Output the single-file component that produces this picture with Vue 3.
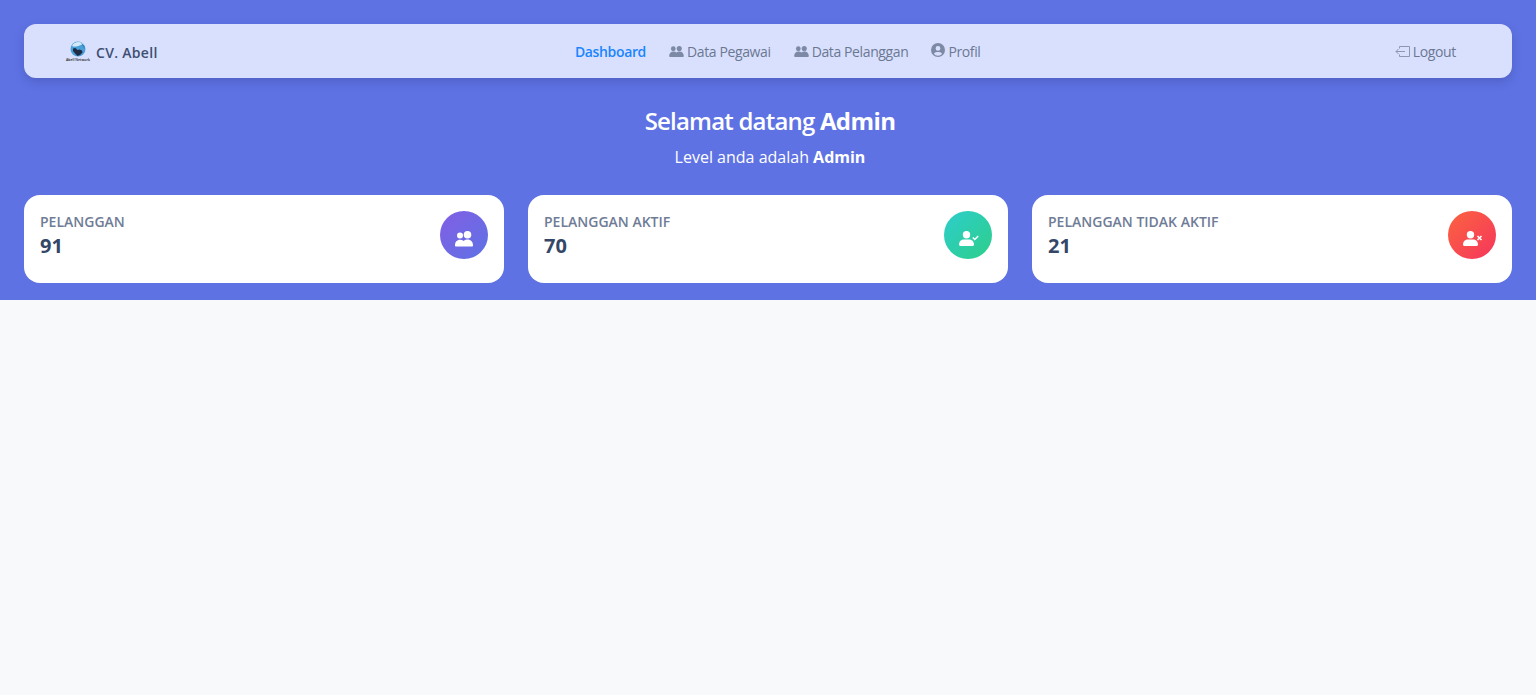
<template>
  <div class="page">
    <header class="hero">
      <nav class="navbar">
        <a class="brand">
          <span class="logo">
            <svg width="16" height="16" viewBox="0 0 16 16">
              <circle cx="8" cy="8" r="7.500" fill="#4a9fd8" />
              <path d="M2 5c1.500-4 9-6 12-1-2-.5-3-.5-4.500.5C7.500 5.500 4 6 2 5z" fill="#d3e9f7" />
              <path d="M11 2c2.500 1 4 3.500 3.500 6-1-1-1.500-3-3.500-6z" fill="#2f7fc0" />
              <path d="M3 7.500l2.500-.5 2 2 2-.5 2.500 1 .5 2-2.500 2.500-2.500 1-2-2-2.500-3z" fill="#1f2c44" />
            </svg>
            <span class="logo-text">Abell Network</span>
          </span>
          <span class="brand-name">CV. Abell</span>
        </a>
        <ul class="menu">
          <li v-for="item in menu" :key="item.label" class="menu-item" :class="{ active: item.active }">
            <svg v-if="item.icon === 'users'" class="nav-icon" viewBox="0 0 16 12">
              <circle cx="4.500" cy="3" r="2.600" />
              <circle cx="11" cy="2.800" r="2.800" />
              <path d="M0 11c0-3 2-5 4.800-5 1.300 0 2.300.4 3.200 1.100C8.900 6.400 9.900 6 11.200 6 14 6 16 8 16 11c0 .6-.4 1-1 1H1c-.6 0-1-.4-1-1z" />
            </svg>
            <svg v-else-if="item.icon === 'profile'" class="nav-icon round" viewBox="0 0 14 14">
              <path fill-rule="evenodd" d="M7 0a7 7 0 1 1 0 14A7 7 0 0 1 7 0zm0 3a2.400 2.400 0 1 0 0 4.800A2.400 2.400 0 0 0 7 3zM2.900 10.800C3.800 12 5.300 12.700 7 12.700s3.200-.7 4.100-1.900C10.700 9.700 9.500 8.900 8 8.900H6c-1.500 0-2.700.8-3.100 1.900z" />
            </svg>
            {{ item.label }}
          </li>
        </ul>
        <a class="logout">
          <svg class="logout-icon" viewBox="0 0 16 13">
            <path d="M4.500 3.500V1.500h10v10h-10v-2" />
            <path d="M10 6.500H1M3.500 4L1 6.500 3.500 9" />
          </svg>
          Logout
        </a>
      </nav>

      <div class="welcome">
        <h1>Selamat datang <b>Admin</b></h1>
        <p>Level anda adalah <b>Admin</b></p>
      </div>

      <div class="stats">
        <div v-for="card in cards" :key="card.title" class="card">
          <div>
            <div class="card-title">{{ card.title }}</div>
            <div class="card-value">{{ card.value }}</div>
          </div>
          <div class="circle" :class="card.color">
            <svg v-if="card.type === 'users'" class="users" width="20" height="16" viewBox="0 0 20 16" fill="#fff">
              <circle cx="6" cy="4.500" r="3" />
              <circle cx="13.500" cy="3.800" r="3.800" />
              <path d="M1 14.500C1 11 3 8.800 6 8.800c1.500 0 2.700.4 3.700 1.100C10.800 9 12.300 8.500 13.500 8.500c3.500 0 5.500 2.500 5.500 6 0 .6-.4 1-1 1H2c-.6 0-1-.4-1-1z" />
            </svg>
            <svg v-else class="person" width="20" height="15" viewBox="0 0 20 15" fill="#fff">
              <circle cx="7.500" cy="3.700" r="3.700" />
              <path d="M0 13.500C0 10.400 2.400 8.500 5 8.500h5c2.600 0 5 1.900 5 5 0 .9-.6 1.500-1.500 1.500h-12C.6 15 0 14.400 0 13.500z" />
              <path v-if="card.type === 'check'" d="M13.800 6.500l2 2 3.400-3.600" fill="none" stroke="#fff" stroke-width="1.500" />
              <path v-else d="M14.500 5l4 4M18.500 5l-4 4" fill="none" stroke="#fff" stroke-width="1.600" />
            </svg>
          </div>
        </div>
      </div>
    </header>
  </div>
</template>

<script setup>
const menu = [
  { label: 'Dashboard', active: true },
  { label: 'Data Pegawai', icon: 'users' },
  { label: 'Data Pelanggan', icon: 'users' },
  { label: 'Profil', icon: 'profile' }
];

const cards = [
  { title: 'PELANGGAN', value: 91, color: 'purple', type: 'users' },
  { title: 'PELANGGAN AKTIF', value: 70, color: 'green', type: 'check' },
  { title: 'PELANGGAN TIDAK AKTIF', value: 21, color: 'red', type: 'cross' }
];
</script>

<style>
html, body {
  margin: 0;
  background: #f8f9fb;
}
</style>

<style scoped>
.page {
  min-height: 695px;
  background: #f8f9fb;
  font-family: "Open Sans", sans-serif;
}

.hero {
  height: 300px;
  box-sizing: border-box;
  padding: 24px 24px 0;
  background: #5e72e4;
}

.navbar {
  height: 54px;
  box-sizing: border-box;
  padding: 0 56px 0 42px;
  display: flex;
  align-items: center;
  justify-content: space-between;
  background: #d9e0fe;
  border-radius: 12px;
  box-shadow: 0 4px 10px rgba(40, 50, 110, 0.25);
}

.brand {
  display: flex;
  align-items: center;
  gap: 6px;
}

.logo {
  width: 24px;
  display: flex;
  flex-direction: column;
  align-items: center;
  color: #222;
}

.logo svg {
  display: block;
}

.logo-text {
  font-size: 3.500px;
  line-height: 5px;
  white-space: nowrap;
  font-weight: 600;
}

.brand-name {
  font-size: 14px;
  font-weight: 600;
  color: #3e4f72;
  position: relative;
  top: 1px;
  letter-spacing: 0.3px;
}

.menu {
  list-style: none;
  margin: 0 0 0 3px;
  padding: 0;
  display: flex;
  gap: 23px;
}

.menu-item {
  font-size: 14px;
  color: #6b7892;
  display: flex;
  align-items: center;
  gap: 3px;
  letter-spacing: -0.38px;
}

.menu-item.active {
  color: #1a85ff;
  font-weight: 600;
  letter-spacing: -0.35px;
}

.nav-icon {
  width: 15px;
  height: 11px;
  fill: #7d8aa5;
}

.nav-icon.round {
  width: 14px;
  height: 14px;
  position: relative;
  top: -1px;
}

.logout {
  font-size: 14px;
  color: #6b7892;
  display: flex;
  align-items: center;
  gap: 2px;
  letter-spacing: -0.35px;
}

.logout-icon {
  width: 16px;
  height: 13px;
  fill: none;
  stroke: #8c98b0;
  stroke-width: 1;
}

.welcome {
  text-align: center;
  color: #fff;
  padding: 26px 0 0 4px;
}

.welcome h1 {
  margin: 0;
  font-size: 24px;
  line-height: 34px;
  font-weight: 600;
  letter-spacing: -0.8px;
}

.welcome b {
  font-weight: 700;
  letter-spacing: -0.6px;
}

.welcome p {
  margin: 9px 0 0;
  font-size: 16px;
  line-height: 20px;
}

.welcome p b {
  letter-spacing: 0;
}

.stats {
  display: grid;
  grid-template-columns: repeat(3, 1fr);
  gap: 24px;
  margin-top: 28px;
}

.card {
  height: 88px;
  box-sizing: border-box;
  padding: 16px;
  display: flex;
  justify-content: space-between;
  background: #fff;
  border-radius: 16px;
}

.card-title {
  font-size: 14px;
  line-height: 22px;
  font-weight: 600;
  color: #6f7c96;
}

.card-value {
  font-size: 20px;
  line-height: 25px;
  font-weight: 700;
  color: #344767;
}

.circle {
  width: 48px;
  height: 48px;
  border-radius: 50%;
  display: flex;
  align-items: center;
  justify-content: center;
}

.circle svg {
  position: relative;
}

.circle .users {
  top: 4px;
  left: 0;
}

.circle .person {
  top: 3px;
  left: 1px;
}

.purple {
  background: linear-gradient(135deg, #825ee4, #5e72e4);
}

.green {
  background: linear-gradient(135deg, #2dcecc, #2dce89);
}

.red {
  background: linear-gradient(135deg, #fb6340, #f5365c);
}
</style>
